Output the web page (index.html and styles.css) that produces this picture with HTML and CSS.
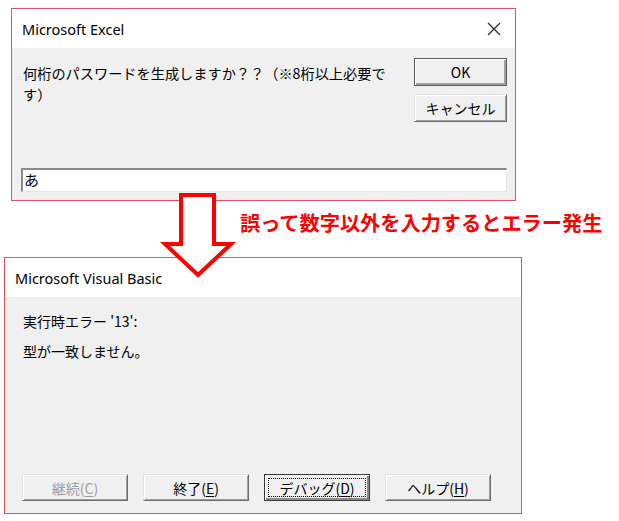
FILE: index.html
```html
<!DOCTYPE html>
<html lang="ja">
<head>
<meta charset="utf-8">
<title>Excel dialogs</title>
<link rel="stylesheet" href="styles.css">
</head>
<body>
<div class="page">
  <div class="dlg dlg-excel">
    <div class="titlebar">
      <span class="title">Microsoft Excel</span>
      <svg class="close" width="14" height="14" viewBox="0 0 14 14"><path d="M1 1 L13 13 M13 1 L1 13" stroke="#222" stroke-width="1.1" fill="none"/></svg>
    </div>
    <div class="body body-excel">
      <div class="toprow">
        <div class="msg">何桁のパスワードを生成しますか？？（※8桁以上必要です）</div>
        <div class="btncol">
          <div class="btn btn-default">OK</div>
          <div class="btn">キャンセル</div>
        </div>
      </div>
      <div class="field">あ</div>
    </div>
  </div>

  <div class="midrow">
    <div class="caption">誤って数字以外を入力するとエラー発生</div>
  </div>

  <div class="dlg dlg-vb">
    <div class="titlebar">
      <span class="title">Microsoft Visual Basic</span>
    </div>
    <div class="body body-vb">
      <div class="vbtext">実行時エラー '13':</div>
      <div class="vbtext vbtext2">型が一致しません。</div>
      <div class="vbbtns">
        <div class="btn vbbtn disabled">継続(<u>C</u>)</div>
        <div class="btn vbbtn">終了(<u>E</u>)</div>
        <div class="btn vbbtn btn-focus"><span class="focusrect">デバッグ(<u>D</u>)</span></div>
        <div class="btn vbbtn">ヘルプ(<u>H</u>)</div>
      </div>
    </div>
  </div>

  <svg class="arrow" width="90" height="100" viewBox="155 188 90 100">
    <polygon points="181,195 214,195 214,244 231,244 198,275 165,244 181,244" fill="#fff" stroke="#ff0000" stroke-width="4" stroke-linejoin="miter"/>
  </svg>
</div>
</body>
</html>
```

FILE: styles.css
```css
* { box-sizing: border-box; }
html, body { margin: 0; padding: 0; background: #fff; }
body {
  font-family: "Noto Sans CJK JP", "Noto Sans", sans-serif;
  color: #000;
}
.page {
  position: relative;
  width: 619px;
  height: 521px;
  padding-top: 8px;
}
.dlg {
  border: 1px solid #e4525c;
  background: #f0f0f0;
  display: flex;
  flex-direction: column;
}
.dlg-excel {
  margin-left: 11px;
  width: 505px;
  height: 193px;
}
.dlg-vb {
  margin-left: 4px;
  width: 518px;
  height: 257px;
}
.titlebar {
  background: #fff;
  height: 39px;
  display: flex;
  align-items: center;
  justify-content: space-between;
  flex: none;
}
.title {
  font-family: "Noto Sans", sans-serif;
  font-size: 14.5px;
  color: #000;
}
.dlg-excel .title { padding-left: 10px; }
.dlg-vb .title { padding-left: 10px; }
.close { margin-right: 14px; }

.body { flex: 1; display: flex; flex-direction: column; }
.body-excel { padding: 10px 8px 8px 9px; }
.toprow { display: flex; justify-content: space-between; }
.msg {
  width: 373px;
  margin-top: 5px;
  margin-left: 2px;
  font-size: 14.2px;
  line-height: 21px;
}
.btncol { display: flex; flex-direction: column; gap: 8px; }
.btn {
  background: #f0f0f0;
  border: 1px solid;
  border-color: #e3e3e3 #6d6d6d #6d6d6d #e3e3e3;
  box-shadow: inset 1px 1px #fff, inset -1px -1px #a0a0a0;
  display: flex;
  align-items: center;
  justify-content: center;
  font-size: 14px;
  color: #000;
}
.btncol .btn { width: 93px; height: 28px; }
.btn-default {
  border-color: #5a5a5a;
  box-shadow: inset 1px 1px #fff, inset -2px -2px #a0a0a0;
}
.field {
  margin-top: auto;
  height: 24px;
  background: #fff;
  border-style: solid;
  border-width: 2px 1px 1px 2px;
  border-color: #8a8a8a #e6e6e6 #e6e6e6 #8a8a8a;
  font-size: 15px;
  line-height: 20px;
  padding-left: 1px;
}

.midrow {
  height: 56px;
  padding-left: 240px;
  padding-top: 10px;
}
.caption {
  color: #ff0000;
  font-weight: bold;
  font-size: 20.2px;
  line-height: 24px;
  white-space: nowrap;
}

.body-vb { padding: 14px 12px 12px 17px; }
.vbtext {
  font-size: 14px;
  line-height: 20px;
  margin-left: 1px;
}
.vbtext2 { margin-top: 10px; }
.vbbtns {
  margin-top: auto;
  display: flex;
  gap: 15px;
}
.vbbtn { width: 106px; height: 27px; font-size: 14px; }
.disabled { color: #a0a0a0; }
.btn-focus {
  border-color: #3a3a3a;
  box-shadow: inset 1px 1px #fff, inset -2px -2px #8a8a8a;
  padding: 3px;
}
.focusrect {
  display: flex;
  align-items: center;
  justify-content: center;
  width: 100%;
  height: 100%;
  border: 1px dotted #000;
}
u { text-decoration: underline; text-underline-offset: 2px; }

.arrow {
  position: absolute;
  left: 155px;
  top: 188px;
}
```
